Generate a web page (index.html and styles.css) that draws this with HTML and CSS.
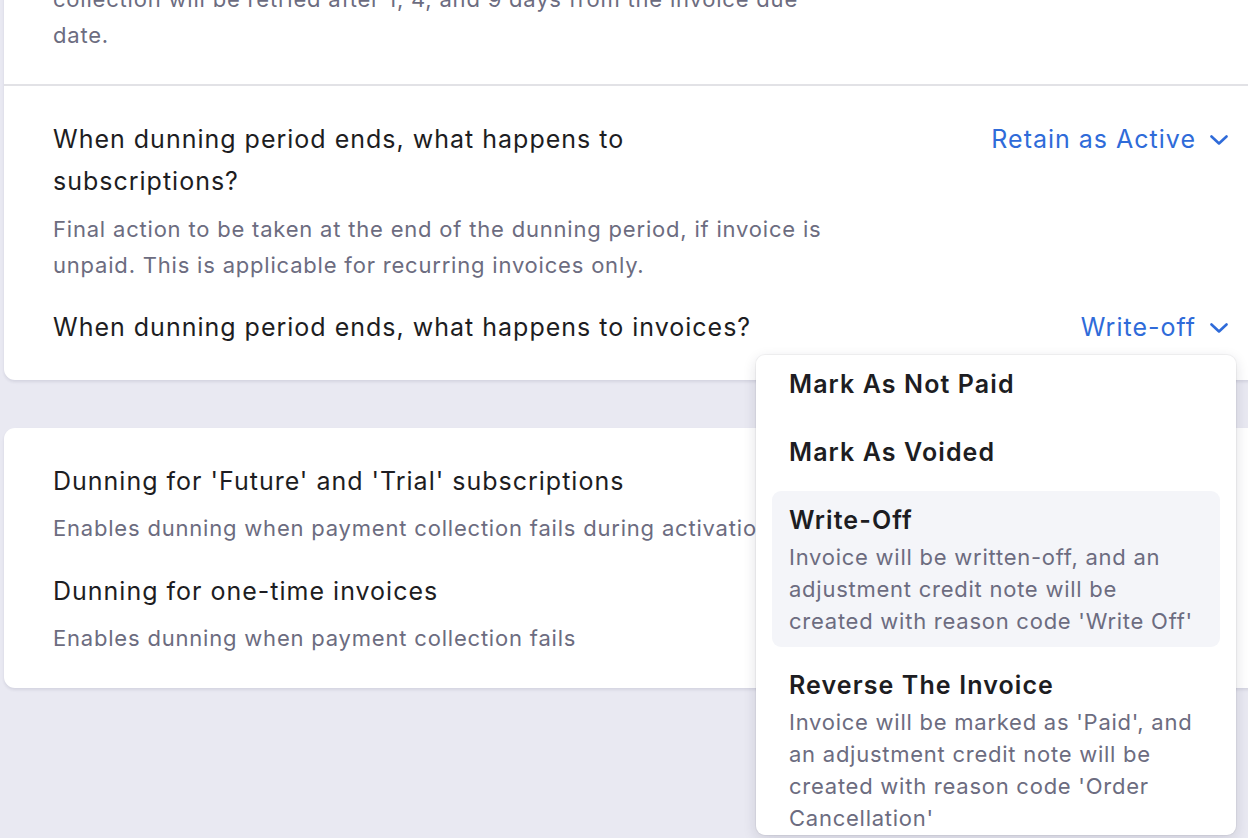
FILE: index.html
```html
<!DOCTYPE html>
<html lang="en">
<head>
<meta charset="utf-8">
<title>Dunning settings</title>
<link rel="stylesheet" href="styles.css">
</head>
<body>
<main class="page">
  <section class="card">
    <div class="section section-first">
      <div class="row">
        <div class="text-col">
          <h3 class="title">Retry payment collection</h3>
          <p class="desc desc-wide">If payment collection fails for an invoice, the payment<br>collection will be retried after 1, 4, and 9 days from the invoice due date.</p>
        </div>
      </div>
    </div>
    <div class="section">
      <div class="row">
        <div class="text-col">
          <h3 class="title title-narrow">When dunning period ends, what happens to subscriptions?</h3>
          <p class="desc desc-wide">Final action to be taken at the end of the dunning period, if invoice is unpaid. This is applicable for recurring invoices only.</p>
        </div>
        <button class="select">Retain as Active
          <svg class="chev" width="18" height="12" viewBox="0 0 18 12"><polyline points="1.5,2.5 9,9.5 16.5,2.5" fill="none" stroke="currentColor" stroke-width="2.6" stroke-linecap="round" stroke-linejoin="round"/></svg>
        </button>
      </div>
      <div class="row row-next">
        <div class="text-col">
          <h3 class="title">When dunning period ends, what happens to invoices?</h3>
        </div>
        <div class="select-wrap">
          <button class="select">Write-off
            <svg class="chev" width="18" height="12" viewBox="0 0 18 12"><polyline points="1.5,2.5 9,9.5 16.5,2.5" fill="none" stroke="currentColor" stroke-width="2.6" stroke-linecap="round" stroke-linejoin="round"/></svg>
          </button>
          <div class="menu">
            <div class="opt"><div class="opt-title">Mark As Not Paid</div></div>
            <div class="opt"><div class="opt-title">Mark As Voided</div></div>
            <div class="opt opt-active">
              <div class="opt-title">Write-Off</div>
              <div class="opt-desc">Invoice will be written-off, and an adjustment credit note will be created with reason code 'Write Off'</div>
            </div>
            <div class="opt">
              <div class="opt-title">Reverse The Invoice</div>
              <div class="opt-desc">Invoice will be marked as 'Paid', and an adjustment credit note will be created with reason code 'Order Cancellation'</div>
            </div>
          </div>
        </div>
      </div>
    </div>
  </section>

  <section class="card">
    <div class="section">
      <div class="row">
        <div class="text-col">
          <h3 class="title">Dunning for 'Future' and 'Trial' subscriptions</h3>
          <p class="desc desc-tight">Enables dunning when payment collection fails during activation</p>
        </div>
      </div>
      <div class="row row-next2">
        <div class="text-col">
          <h3 class="title">Dunning for one-time invoices</h3>
          <p class="desc desc-tight">Enables dunning when payment collection fails</p>
        </div>
      </div>
    </div>
  </section>
</main>
</body>
</html>
```

FILE: styles.css
```css
html, body {
  margin: 0;
  padding: 0;
  background: #e9e9f2;
  overflow: hidden;
  height: 100%;
}

body {
  font-family: Inter, "Noto Sans", sans-serif;
  color: #1d1d22;
}

.page {
  padding-left: 4px;
  margin-top: -138px;
  width: 1290px;
  display: flex;
  flex-direction: column;
  gap: 48px;
}

.card {
  background: #ffffff;
  border-radius: 11px;
  box-shadow: 0 2px 3px rgba(40, 40, 80, 0.10);
}

.section {
  padding: 32px 66px 32px 49px;
}

.section-first {
  padding-bottom: 31px;
}

.section + .section {
  border-top: 2px solid #e2e2e6;
}

.row {
  display: flex;
  justify-content: space-between;
  align-items: flex-start;
}

.row-next {
  margin-top: 23px;
}

.row-next2 {
  margin-top: 24px;
}

.text-col {
  flex: 1;
  min-width: 0;
}

.title {
  margin: 0;
  font-size: 25px;
  line-height: 42px;
  font-weight: 400;
  letter-spacing: 1px;
  color: #1d1d22;
}

.title-narrow {
  max-width: 720px;
}

.desc {
  margin: 9px 0 0;
  font-size: 22px;
  line-height: 36px;
  letter-spacing: 0.8px;
  color: #6c6c80;
}

.desc-tight {
  margin-top: 8px;
  white-space: nowrap;
}

.desc-wide {
  max-width: 790px;
}

.select-wrap {
  position: relative;
}

.select {
  display: flex;
  align-items: center;
  gap: 14px;
  border: 0;
  background: none;
  padding: 0;
  font-family: inherit;
  font-size: 25px;
  line-height: 42px;
  letter-spacing: 1px;
  color: #2f6bd9;
  white-space: nowrap;
  cursor: pointer;
}

.chev {
  display: block;
  margin-top: 1px;
}

.menu {
  position: absolute;
  top: 49px;
  right: -8px;
  width: 480px;
  height: 480px;
  box-sizing: border-box;
  padding: 0 16px;
  background: #ffffff;
  border-radius: 9px;
  box-shadow: 0 0 0 1px rgba(0, 0, 0, 0.04), 0 4px 14px rgba(30, 30, 60, 0.14);
  overflow: hidden;
  display: flex;
  flex-direction: column;
}

.opt {
  padding: 11px 17px 9px;
  margin-bottom: 12px;
  border-radius: 9px;
  flex-shrink: 0;
}

.opt-active {
  background: #f4f5f9;
  padding-bottom: 10px;
  margin-bottom: 9px;
}

.opt-title {
  font-size: 25px;
  line-height: 36px;
  font-weight: 600;
  letter-spacing: 1.1px;
  color: #1d1d22;
}

.opt-desc {
  margin-top: 3px;
  font-size: 22px;
  line-height: 32px;
  letter-spacing: 0.75px;
  color: #6c6c80;
}
```
